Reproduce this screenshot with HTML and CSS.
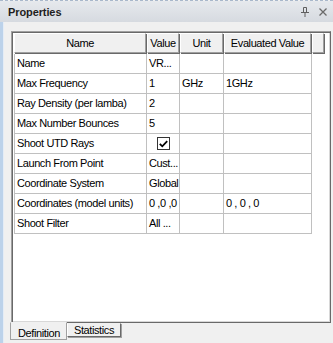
FILE: index.html
```html
<!DOCTYPE html>
<html lang="en">
  <head>
    <meta charset="UTF-8" />
    <title>Properties</title>
    <link rel="stylesheet" href="styles.css">
  </head>
  <body>
    <div class="window">
      <div class="titlebar">
        <div class="title">Properties</div>
        <div class="controls">
          <svg class="pin" width="8" height="10" viewBox="0 0 8 10">
            <path d="M2.5 0.5 H5.5 V5.5 M2.5 0.5 V5.5 M0 5.5 H8 M4 5.5 V10" fill="none" stroke="#5f5f5f" stroke-width="1"/>
          </svg>
          <svg class="close" width="8" height="8" viewBox="0 0 8 8">
            <path d="M0.5 0.5 L7.5 7.5 M7.5 0.5 L0.5 7.5" stroke="#6a6a6a" stroke-width="1.3"/>
          </svg>
        </div>
      </div>
      <div class="main">
        <div class="strip"></div>
        <div class="panel">
          <div class="gridbox">
            <div class="grid">
              <div class="hcell">Name</div>
              <div class="hcell">Value</div>
              <div class="hcell">Unit</div>
              <div class="hcell">Evaluated Value</div>
              <div class="hcell"></div>

              <div class="cell first">Name</div>
              <div class="cell">VR...</div>
              <div class="cell"></div>
              <div class="cell"></div>
              <div class="spare"></div>

              <div class="cell first">Max Frequency</div>
              <div class="cell">1</div>
              <div class="cell">GHz</div>
              <div class="cell">1GHz</div>
              <div class="spare"></div>

              <div class="cell first">Ray Density (per lamba)</div>
              <div class="cell">2</div>
              <div class="cell"></div>
              <div class="cell"></div>
              <div class="spare"></div>

              <div class="cell first">Max Number Bounces</div>
              <div class="cell">5</div>
              <div class="cell"></div>
              <div class="cell"></div>
              <div class="spare"></div>

              <div class="cell first">Shoot UTD Rays</div>
              <div class="cell center">
                <span class="check">
                  <svg width="9" height="8" viewBox="0 0 9 8">
                    <path d="M0.8 3.8 L3.3 6.3 L8.2 1.2" fill="none" stroke="#000" stroke-width="1.8"/>
                  </svg>
                </span>
              </div>
              <div class="cell"></div>
              <div class="cell"></div>
              <div class="spare"></div>

              <div class="cell first">Launch From Point</div>
              <div class="cell">Cust...</div>
              <div class="cell"></div>
              <div class="cell"></div>
              <div class="spare"></div>

              <div class="cell first">Coordinate System</div>
              <div class="cell">Global</div>
              <div class="cell"></div>
              <div class="cell"></div>
              <div class="spare"></div>

              <div class="cell first">Coordinates (model units)</div>
              <div class="cell">0 ,0 ,0</div>
              <div class="cell"></div>
              <div class="cell">0 , 0 , 0</div>
              <div class="spare"></div>

              <div class="cell first">Shoot Filter</div>
              <div class="cell">All ...</div>
              <div class="cell"></div>
              <div class="cell"></div>
              <div class="spare"></div>
            </div>
          </div>
          <div class="tabs">
            <div class="tab active">Definition</div>
            <div class="tab">Statistics</div>
          </div>
        </div>
      </div>
    </div>
  </body>
</html>
```

FILE: styles.css
```css
* {
  box-sizing: border-box;
  font-family: "Liberation Sans", Arial, sans-serif;
}
body {
  margin: 0;
  background-color: #f0f0f0;
}
.window {
  width: 333px;
  height: 343px;
  overflow: hidden;
  display: flex;
  flex-direction: column;
  border-top: 1px dashed #a9b8cb;
  background-color: #f0f0f0;
}
.titlebar {
  height: 21px;
  display: flex;
  align-items: center;
  justify-content: space-between;
  padding: 0 6px 0 8px;
  background: linear-gradient(#e6e9ed, #d6dae0);
}
.title {
  font-size: 11px;
  font-weight: bold;
  letter-spacing: -0.1px;
  color: #1e1e1e;
}
.controls {
  display: flex;
  align-items: center;
  gap: 10px;
}
.main {
  flex: 1;
  display: flex;
}
.strip {
  width: 4px;
  background-color: #bcd2ea;
  border-right: 1px solid #e4ecf6;
}
.panel {
  flex: 1;
  padding: 9px 2px 0 7px;
}
.gridbox {
  width: 320px;
  height: 292px;
  background-color: #fff;
  border: 1px solid;
  border-color: #a0a0a0 #696969 #696969 #a0a0a0;
  box-shadow: inset 1px 1px 0 #696969, inset -1px -1px 0 #d8d8d8;
  padding: 1px 0 0 2px;
}
.grid {
  display: grid;
  grid-template-columns: 133px 33px 44px 88px 13px;
  grid-auto-rows: 20px;
  grid-template-rows: 21px;
  font-size: 11px;
  letter-spacing: -0.4px;
  color: #000;
}
.hcell {
  background-color: #f0f0f0;
  border: 1px solid;
  border-color: #fff #a0a0a0 #a0a0a0 #fff;
  box-shadow: 1px 1px 0 #696969;
  text-align: center;
  line-height: 18px;
  margin: 0 1px 1px 0;
}
.cell {
  border-right: 1px solid #c0c0c0;
  border-bottom: 1px solid #c0c0c0;
  padding-left: 2px;
  line-height: 19px;
  white-space: nowrap;
  overflow: hidden;
}
.first {
  border-left: 1px solid #c0c0c0;
}
.center {
  display: flex;
  align-items: center;
  justify-content: center;
  padding-left: 0;
}
.check {
  width: 13px;
  height: 13px;
  border: 1px solid #333;
  background-color: #fff;
  display: flex;
  align-items: center;
  justify-content: center;
}
.tabs {
  display: flex;
  margin-left: -1px;
  font-size: 11px;
  letter-spacing: -0.4px;
}
.tab {
  height: 14px;
  padding: 0 6px;
  line-height: 13px;
  border: 1px solid;
  border-color: #f0f0f0 #696969 #696969 #fff;
  box-shadow: 1px 1px 0 #a0a0a0;
  color: #000;
}
.tab.active {
  height: 18px;
  width: 57px;
  padding: 4px 0 0 7px;
  border-color: #f0f0f0 #a0a0a0 #a0a0a0 #a0a0a0;
  box-shadow: none;
  margin-top: -1px;
}
```
